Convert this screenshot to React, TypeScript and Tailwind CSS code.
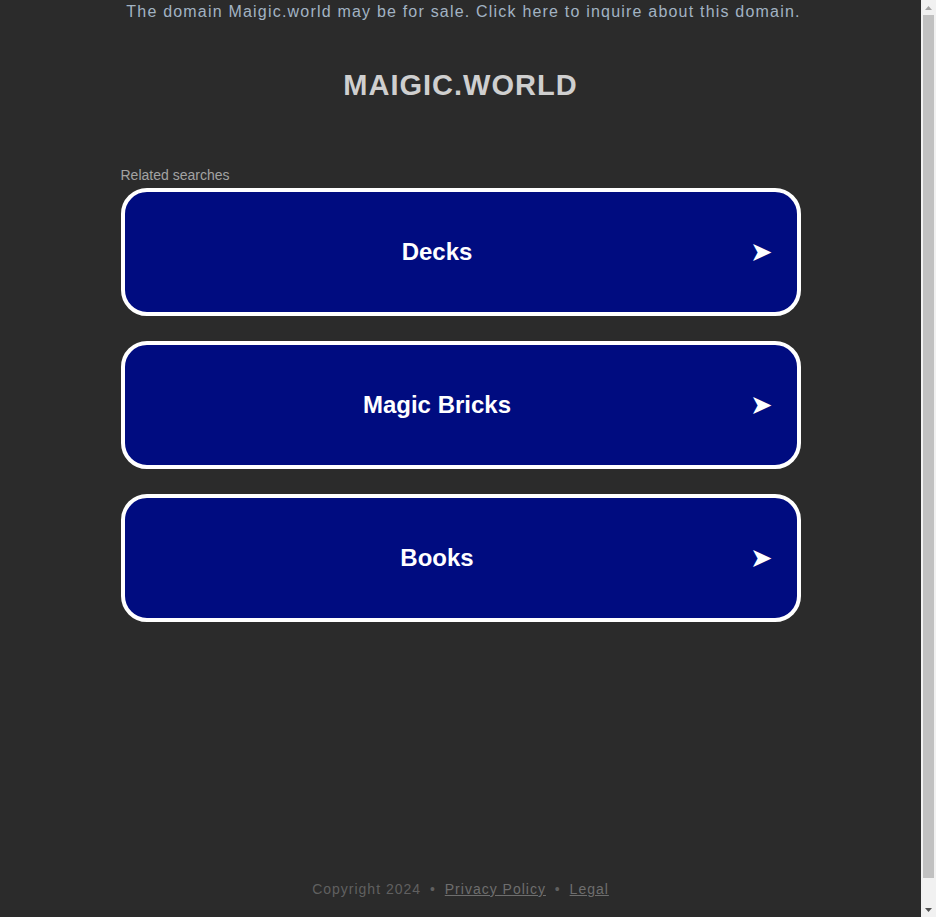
const searches = ["Decks", "Magic Bricks", "Books"]

function SearchCard({ label }: { label: string }) {
  return (
    <a
      href="#"
      className="flex h-[128px] items-center rounded-[26px] border-4 border-white bg-[#000c80] pr-[27px] text-white no-underline"
    >
      <span className="flex-1 text-center text-[24px] font-bold leading-[30px]">{label}</span>
      <span className="w-[20px] text-center text-[27px] leading-[30px]">➤</span>
    </a>
  )
}

// page scrollbar as it shows in the screenshot
function Scrollbar() {
  return (
    <div className="flex h-[917px] w-[15px] shrink-0 flex-col bg-[#f1f1f1]">
      <div className="flex h-[15px] items-center justify-center">
        <svg width="7" height="4" viewBox="0 0 7 4">
          <path d="M3.5 0L7 4H0z" fill="#a3a3a3" />
        </svg>
      </div>
      <div className="mx-[2px] h-[863px] bg-[#c1c1c1]" />
      <div className="mt-auto flex h-[15px] items-center justify-center">
        <svg width="7" height="4" viewBox="0 0 7 4">
          <path d="M0 0H7L3.5 4z" fill="#505050" />
        </svg>
      </div>
    </div>
  )
}

export default function App() {
  return (
    <div className="flex h-[917px] overflow-hidden bg-[#2b2b2b] font-['Liberation_Sans',Arial,sans-serif]">
      <div className="flex min-h-[923px] flex-1 flex-col">
        <p className="pl-[6px] pt-[1px] text-center text-[16px] leading-[22px] tracking-[1.2px] text-[#a2b3c3]">
          The domain Maigic.world may be for sale. Click here to inquire about this domain.
        </p>

        <h1 className="mt-[44px] text-center text-[29px] font-bold leading-[36px] tracking-[1px] text-[#cfcfcf]">
          MAIGIC.WORLD
        </h1>

        <div className="mx-auto mt-[62px] w-[680px]">
          <p className="text-[14px] leading-[20px] text-[#a3a3a3]">Related searches</p>
          <div className="mt-[3px] flex flex-col gap-[25px]">
            {searches.map((s) => (
              <SearchCard key={s} label={s} />
            ))}
          </div>
        </div>

        <footer className="mt-auto pb-[24px] text-center text-[14px] leading-[20px] tracking-[1px] text-[#606060]">
          Copyright 2024 <span className="mx-[4px]">•</span>{" "}
          <a href="#" className="text-[#6e6e6e] underline">
            Privacy Policy
          </a>{" "}
          <span className="mx-[4px]">•</span>{" "}
          <a href="#" className="text-[#6e6e6e] underline">
            Legal
          </a>
        </footer>
      </div>
      <Scrollbar />
    </div>
  )
}
